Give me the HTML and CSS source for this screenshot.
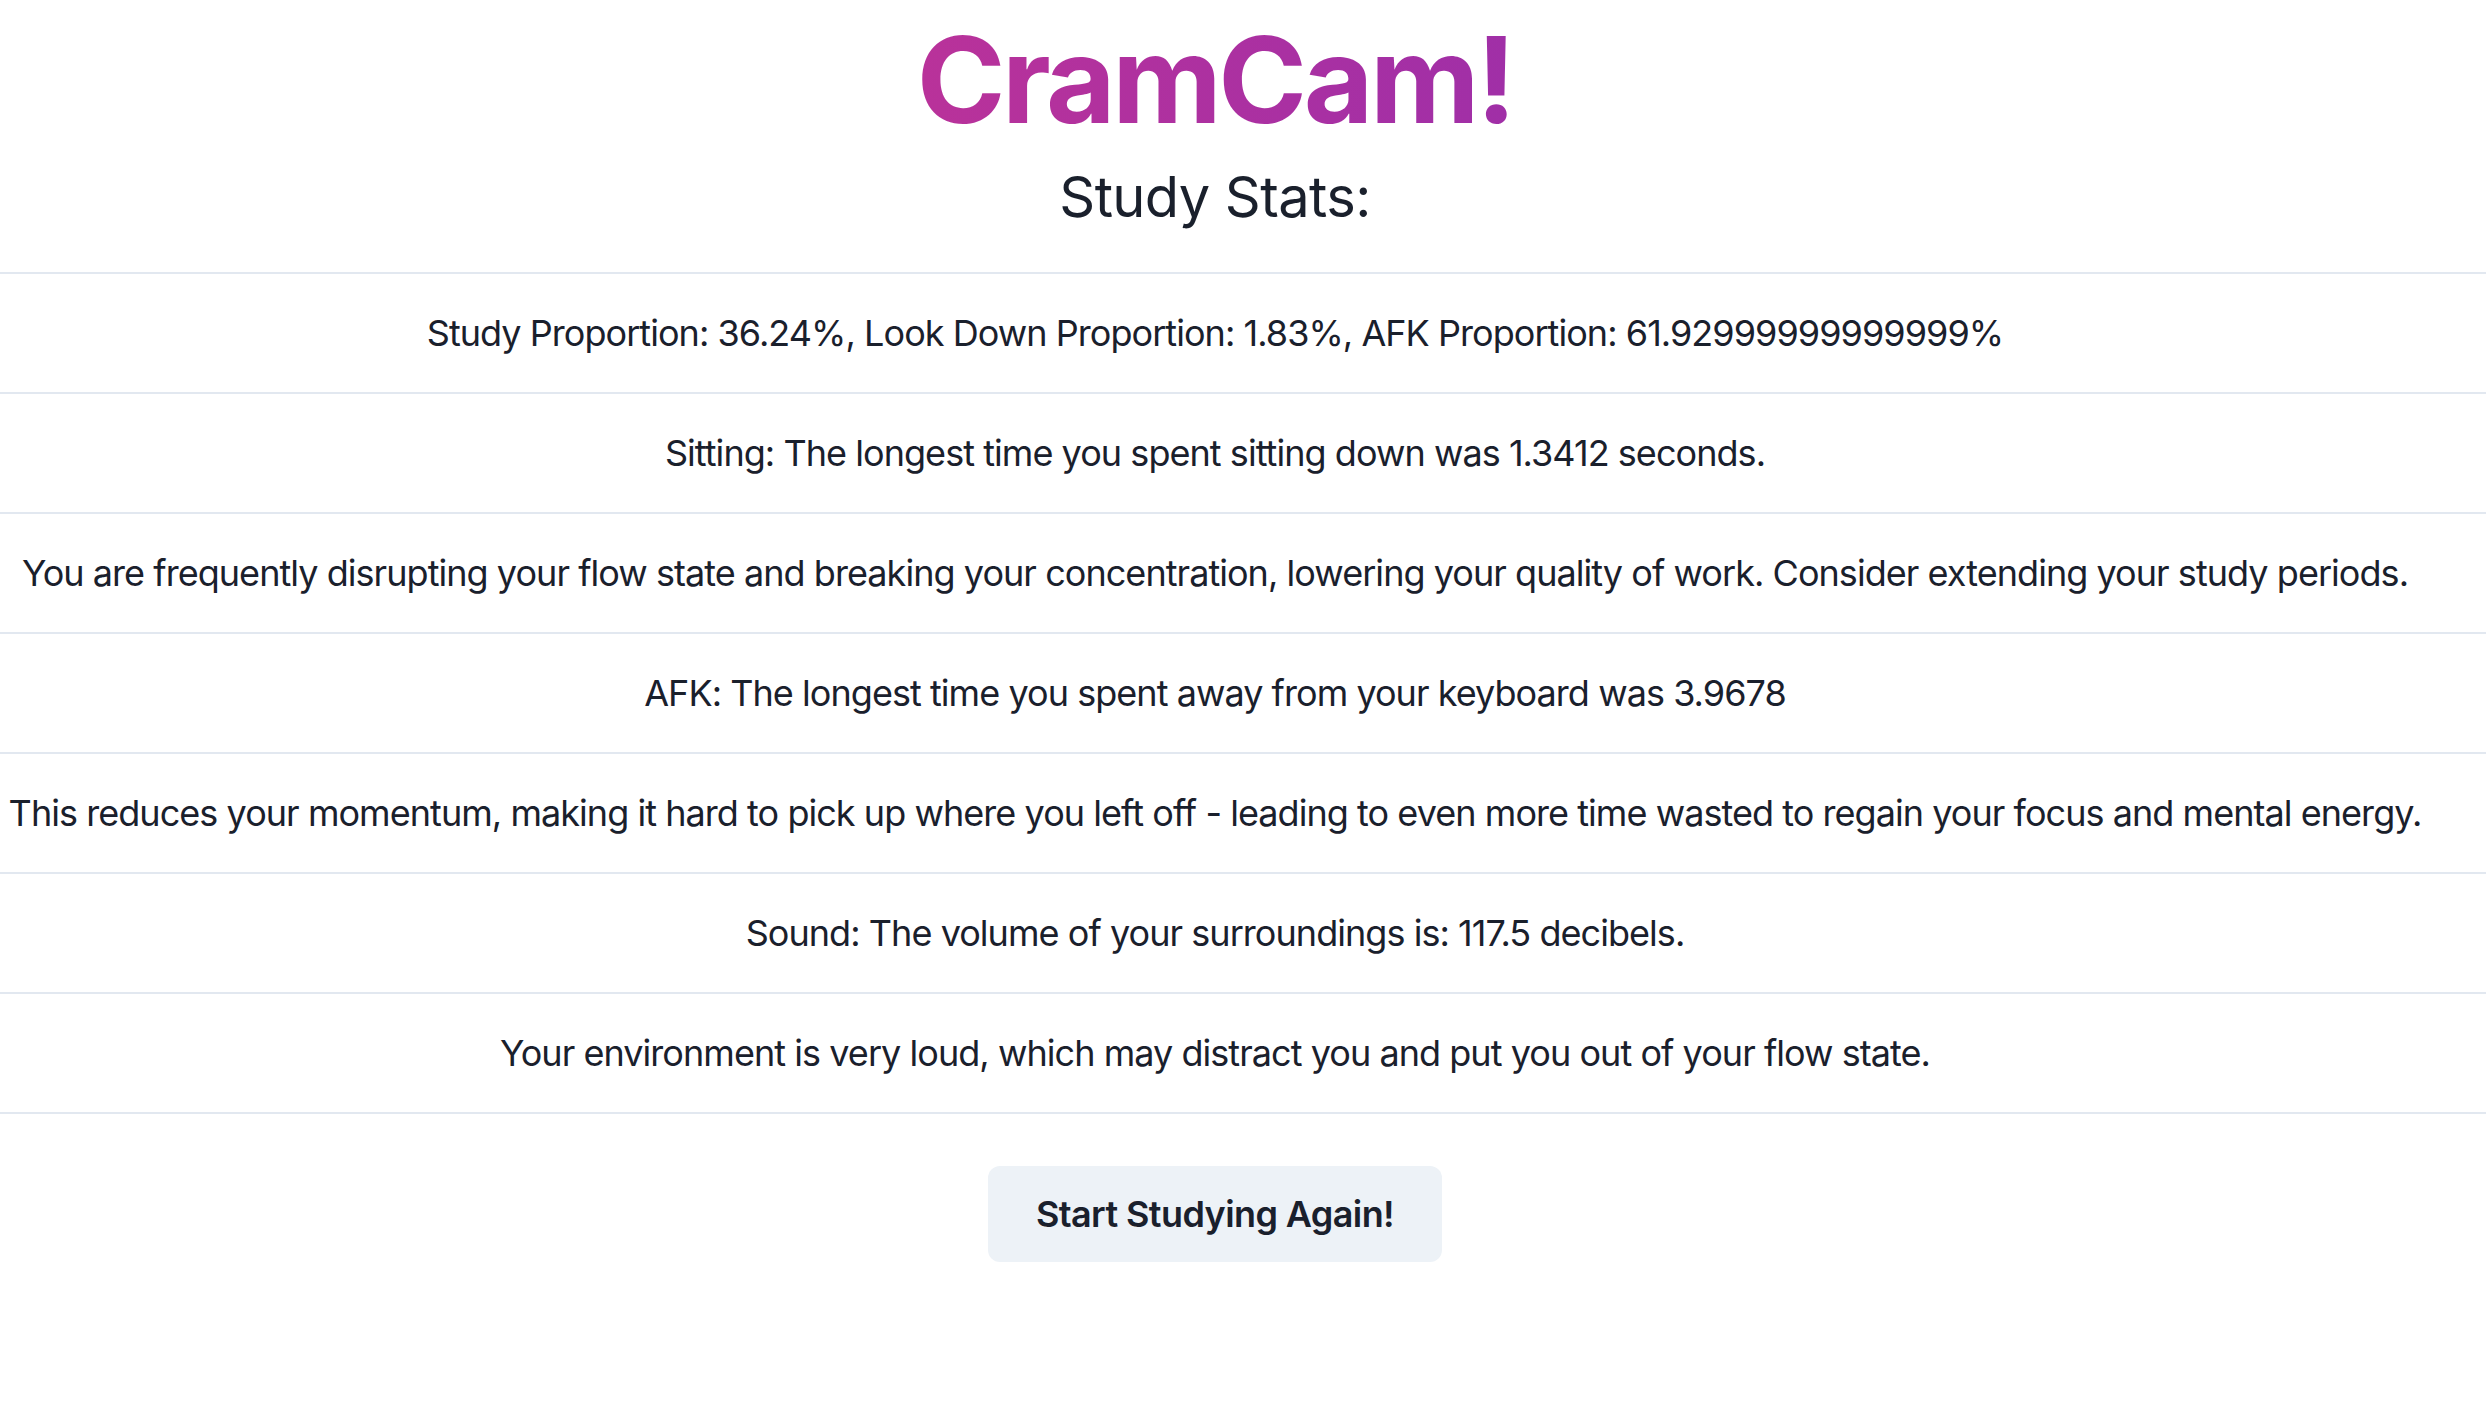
FILE: index.html
```html
<html>
	<head>
	<title>CramCam!</title>
	<link rel="stylesheet" href="styles.css">
	</head><body>
	<div class="page">
		<div class="head">
			<h1 class="title">CramCam!</h1>
			<h2 class="sub">Study Stats:</h2>
		</div>
		<table class="stats">
			<tr><td>Study Proportion: 36.24%, Look Down Proportion: 1.83%, AFK Proportion: 61.92999999999999%</td></tr>
			<tr><td>Sitting: The longest time you spent sitting down was 1.3412 seconds.</td></tr>
			<tr><td>You are frequently disrupting your flow state and breaking your concentration, lowering your quality of work. Consider extending your study periods.</td></tr>
			<tr><td>AFK: The longest time you spent away from your keyboard was 3.9678</td></tr>
			<tr><td>This reduces your momentum, making it hard to pick up where you left off - leading to even more time wasted to regain your focus and mental energy.</td></tr>
			<tr><td>Sound: The volume of your surroundings is: 117.5 decibels.</td></tr>
			<tr><td>Your environment is very loud, which may distract you and put you out of your flow state.</td></tr>
		</table>
		<div class="foot">
			<button class="btn">Start Studying Again!</button>
		</div>
	</div>
	</body>
</html>
```

FILE: styles.css
```css
body {
	margin: 0;
	font-family: Inter, "Noto Sans", sans-serif;
	color: #1a202c;
	background: #fff;
}
.page {
	display: flex;
	flex-direction: column;
}
.head,
.foot {
	display: flex;
	flex-direction: column;
	align-items: center;
	padding-right: 56px;
}
.head {
	padding-top: 20px;
	padding-bottom: 33px;
}
.title {
	margin: 0;
	font-size: 120px;
	line-height: 1;
	font-weight: 700;
	letter-spacing: -3.4px;
	background: linear-gradient(to right, #b9329a, #a02fa7);
	-webkit-background-clip: text;
	background-clip: text;
	color: transparent;
}
.sub {
	margin: 15px 0 0;
	font-size: 56px;
	line-height: 84px;
	font-weight: 400;
	letter-spacing: -0.6px;
}
.stats {
	width: 100%;
	border-collapse: collapse;
	border-top: 2px solid #e2e8f0;
}
.stats td {
	padding: 32px 56px 32px 0;
	border-bottom: 2px solid #e2e8f0;
	font-size: 36px;
	line-height: 54px;
	letter-spacing: -0.95px;
	text-align: center;
	white-space: nowrap;
}
.foot {
	padding-top: 52px;
}
.btn {
	height: 96px;
	padding: 0 48px;
	border: 0;
	border-radius: 12px;
	background-color: #edf2f7;
	color: #1a202c;
	font-family: inherit;
	font-size: 36px;
	font-weight: 600;
	letter-spacing: -0.6px;
	cursor: pointer;
}
```
